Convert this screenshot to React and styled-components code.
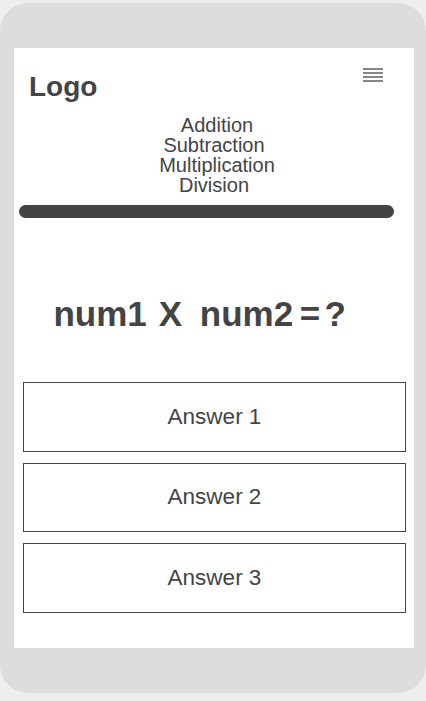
import React from "react";
import styled, { createGlobalStyle } from "styled-components";

const Global = createGlobalStyle`
  html, body { margin: 0; padding: 0; background: #eeeeee; }
  body { font-family: "Liberation Sans", Arial, sans-serif; color: #444444; }
`;

const Frame = styled.div`
  box-sizing: border-box;
  width: 426px;
  height: 690px;
  margin-top: 3px;
  padding: 45px 14px;
  background: #dddddd;
  border-radius: 28px;
`;

const Screen = styled.div`
  width: 400px;
  height: 600px;
  background: #ffffff;
  display: flex;
  flex-direction: column;
`;

const Header = styled.header`
  display: flex;
  justify-content: space-between;
  align-items: flex-start;
  padding: 20px 31px 0 15px;
`;

const Logo = styled.div`
  margin-top: 5px;
  font-size: 28px;
  line-height: 28px;
  font-weight: 700;
  color: #444444;
`;

const MenuButton = styled.svg`
  display: block;
  width: 20px;
  height: 14px;
`;

const Menu = styled.nav`
  margin-top: 14px;
  display: flex;
  flex-direction: column;
  align-items: center;
`;

const MenuItem = styled.div`
  font-size: 20px;
  line-height: 20px;
  color: #444444;
  padding-left: ${(p) => (p.$shift ? "6px" : "0")};
`;

const Progress = styled.div`
  margin: 10px 20px 0 5px;
  height: 13px;
  border-radius: 7px;
  background: #444444;
`;

const Equation = styled.div`
  margin-top: 79px;
  padding-left: 39.4px;
  display: flex;
  align-items: baseline;
  font-size: 35px;
  line-height: 34px;
  font-weight: 700;
  color: #444444;
`;

const Term = styled.span`
  margin-left: ${(p) => p.$ml || 0}px;
`;

const Answers = styled.div`
  margin: 51px 8px 0 9px;
  display: flex;
  flex-direction: column;
  gap: 11px;
`;

const Answer = styled.button`
  box-sizing: border-box;
  height: 69.5px;
  width: 100%;
  border: 1px solid #444444;
  background: #ffffff;
  font-family: "Liberation Sans", Arial, sans-serif;
  font-size: 22.5px;
  color: #444444;
  padding: 0;
  display: flex;
  align-items: center;
  justify-content: center;
`;

export default function App() {
  return (
    <>
      <Global />
      <Frame>
        <Screen>
          <Header>
            <Logo>Logo</Logo>
            <MenuButton viewBox="0 0 20 14">
              {[0.3, 4.3, 8.3, 12.3].map((y) => (
                <rect key={y} x="0" y={y} width="20" height="1.4" fill="#555" />
              ))}
            </MenuButton>
          </Header>
          <Menu>
            <MenuItem $shift>Addition</MenuItem>
            <MenuItem>Subtraction</MenuItem>
            <MenuItem $shift>Multiplication</MenuItem>
            <MenuItem>Division</MenuItem>
          </Menu>
          <Progress />
          <Equation>
            <Term>num1</Term>
            <Term $ml={11.9}>X</Term>
            <Term $ml={17.8}>num2</Term>
            <Term $ml={6.6}>=</Term>
            <Term $ml={4.2}>?</Term>
          </Equation>
          <Answers>
            <Answer>Answer 1</Answer>
            <Answer>Answer 2</Answer>
            <Answer>Answer 3</Answer>
          </Answers>
        </Screen>
      </Frame>
    </>
  );
}
